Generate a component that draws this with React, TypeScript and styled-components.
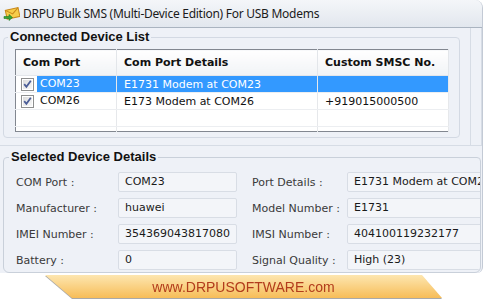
import styled, { createGlobalStyle } from 'styled-components';

const GlobalStyle = createGlobalStyle`
  html, body {
    margin: 0;
    padding: 0;
    background: #ffffff;
  }
  body {
    width: 483px;
    height: 300px;
    overflow: hidden;
    font-family: "DejaVu Sans", Verdana, sans-serif;
  }
`;

const devices = [
  { port: 'COM23', details: 'E1731 Modem at COM23', smsc: '', selected: true },
  { port: 'COM26', details: 'E173 Modem at COM26', smsc: '+919015000500', selected: false },
];

const details = [
  ['COM Port :', 'COM23', 'Port Details :', 'E1731 Modem at COM23'],
  ['Manufacturer :', 'huawei', 'Model Number :', 'E1731'],
  ['IMEI Number :', '354369043817080', 'IMSI Number :', '404100119232177'],
  ['Battery :', '0', 'Signal Quality :', 'High (23)'],
];

const AppIcon = () => (
  <svg width="17" height="15" viewBox="0 0 17 15">
    <g transform="rotate(-12 9 7)">
      <rect x="3" y="3" width="13" height="9" fill="#f7cd4a" stroke="#c9891a" strokeWidth="1" />
      <path d="M3 3 L9.5 8 L16 3" fill="none" stroke="#c9891a" strokeWidth="1" />
    </g>
    <path d="M1 10.5 H6 V8.5 L9.5 11.5 L6 14.5 V12.5 H1 Z" fill="#3aa636" stroke="#1f7a22" strokeWidth="0.6" />
  </svg>
);

const CheckMark = () => (
  <svg width="13" height="13" viewBox="0 0 13 13">
    <defs>
      <linearGradient id="cb" x1="0" y1="0" x2="1" y2="1">
        <stop offset="0" stopColor="#dcdcdc" />
        <stop offset="1" stopColor="#f8f8f8" />
      </linearGradient>
    </defs>
    <rect x="0.5" y="0.5" width="12" height="12" fill="#fff" stroke="#8e8f8f" />
    <rect x="2" y="2" width="9" height="9" fill="url(#cb)" />
    <path d="M3.2 6.2 L5.4 8.8 L9.8 2.8" fill="none" stroke="#4b5d97" strokeWidth="1.8" />
  </svg>
);

export default function App() {
  return (
    <Page>
      <GlobalStyle />
      <Window>
        <TitleBar>
          <AppIcon />
          <TitleText>DRPU Bulk SMS (Multi-Device Edition) For USB Modems</TitleText>
        </TitleBar>
        <TopArea>
          <Group>
            <GroupLegend>Connected Device List</GroupLegend>
            <DeviceTable>
              <colgroup>
                <col style={{ width: 101 }} />
                <col style={{ width: 201 }} />
                <col />
              </colgroup>
              <thead>
                <tr>
                  <HeadCell>Com Port</HeadCell>
                  <HeadCell>Com Port Details</HeadCell>
                  <HeadCell>Custom SMSC No.</HeadCell>
                </tr>
              </thead>
              <tbody>
                {devices.map((d) => (
                  <tr key={d.port}>
                    <PortCell>
                      <PortInner>
                        <CheckMark />
                        <PortName $selected={d.selected}>{d.port}</PortName>
                      </PortInner>
                    </PortCell>
                    <Cell $selected={d.selected}>{d.details}</Cell>
                    <Cell $selected={d.selected}>{d.smsc}</Cell>
                  </tr>
                ))}
                <tr>
                  <Cell />
                  <Cell />
                  <Cell />
                </tr>
                <FillerRow>
                  <td />
                  <td />
                  <td />
                </FillerRow>
              </tbody>
            </DeviceTable>
          </Group>
          <SideRail />
        </TopArea>
        <Splitter />
        <DetailsGroup>
          <GroupLegend>Selected Device Details</GroupLegend>
          <DetailsGrid>
            {details.map(([l1, v1, l2, v2]) => (
              <DetailRow key={l1}>
                <FieldLabel>{l1}</FieldLabel>
                <FieldValue>{v1}</FieldValue>
                <FieldLabel $right>{l2}</FieldLabel>
                <FieldValue>{v2}</FieldValue>
              </DetailRow>
            ))}
          </DetailsGrid>
        </DetailsGroup>
      </Window>
      <BannerShadow>
        <Banner>www.DRPUSOFTWARE.com</Banner>
      </BannerShadow>
    </Page>
  );
}

const Page = styled.div`
  width: 483px;
  height: 300px;
  display: flex;
  flex-direction: column;
  background: #ffffff;
`;

const Window = styled.div`
  width: 482px;
  height: 273px;
  display: flex;
  flex-direction: column;
  background: #eef1f7;
  border-right: 1px solid #c3cad5;
  border-radius: 0 8px 6px 0;
  overflow: hidden;
`;

const TitleBar = styled.div`
  height: 28px;
  flex-shrink: 0;
  display: flex;
  align-items: center;
  gap: 3px;
  padding-left: 3px;
  background: linear-gradient(#f4f6f9, #e2e7ee);
  border-bottom: 1px solid #aab4c0;
  box-sizing: border-box;
`;

const TitleText = styled.span`
  font-family: "Noto Sans", "Open Sans", sans-serif;
  font-size: 12px;
  letter-spacing: -0.27px;
  color: #1b1b1b;
  padding-bottom: 1px;
`;

const TopArea = styled.div`
  height: 117px;
  flex-shrink: 0;
  display: flex;
`;

const Group = styled.fieldset`
  align-self: flex-start;
  margin: 0 0 0 3px;
  padding: 0 10px 5px 11px;
  min-width: 0;
  width: 434px;
  border: 1px solid #d3d9e3;
  border-radius: 4px;
`;

const GroupLegend = styled.legend`
  font-family: "Liberation Sans", Arial, sans-serif;
  font-weight: bold;
  font-size: 13px;
  line-height: 18px;
  color: #111111;
  padding: 0 2px;
  margin-left: -7px;
`;

const SideRail = styled.div`
  width: 10px;
  margin-left: 10px;
  border-left: 1px solid #d6dce5;
  border-right: 1px solid #d6dce5;
`;

const DeviceTable = styled.table`
  margin-top: 3px;
  width: 434px;
  table-layout: fixed;
  border-collapse: collapse;
  border: 1px solid #828790;
  background: #ffffff;
  font-size: 11px;
  color: #111111;
`;

const HeadCell = styled.th`
  height: 25px;
  padding: 0 6px 0 7px;
  text-align: left;
  font-size: 11px;
  font-weight: bold;
  background: linear-gradient(#ffffff, #f1f3f6);
  border-right: 1px solid #e3e6ea;
  border-bottom: 1px solid #e3e6ea;
  white-space: nowrap;
  overflow: hidden;
`;

const Cell = styled.td<{ $selected?: boolean }>`
  height: 16px;
  padding: 0 6px 0 7px;
  white-space: nowrap;
  overflow: hidden;
  background: ${(p) => (p.$selected ? '#3399ff' : 'transparent')};
  color: ${(p) => (p.$selected ? '#ffffff' : '#111111')};
  border-right: 1px solid #e6e8eb;
  border-bottom: 1px solid #eceef1;
`;

const PortCell = styled.td`
  height: 16px;
  padding: 0 0 0 5px;
  border-right: 1px solid #e6e8eb;
  border-bottom: 1px solid #eceef1;
`;

const PortInner = styled.div`
  display: flex;
  align-items: center;
  gap: 3px;
  height: 16px;
`;

const PortName = styled.span<{ $selected?: boolean }>`
  flex: 1;
  height: 16px;
  line-height: 16px;
  padding-left: 3px;
  background: ${(p) => (p.$selected ? '#3399ff' : 'transparent')};
  color: ${(p) => (p.$selected ? '#ffffff' : '#111111')};
`;

const FillerRow = styled.tr`
  height: 5px;
  td {
    border-right: 1px solid #e6e8eb;
  }
`;

const Splitter = styled.div`
  height: 2px;
  flex-shrink: 0;
  border-top: 1px solid #d6dce5;
`;

const DetailsGroup = styled.fieldset`
  flex: 1;
  margin: 0 1px 0 3px;
  padding: 0 0 0 12px;
  min-width: 0;
  border: 1px solid #c9d0da;
  border-radius: 4px 4px 6px 6px;
  overflow: hidden;
`;

const DetailsGrid = styled.div`
  display: flex;
  flex-direction: column;
  gap: 6px;
  padding-top: 6px;
`;

const DetailRow = styled.div`
  display: grid;
  grid-template-columns: 102px 119px 110px 140px;
  align-items: center;
  height: 20px;
`;

const FieldLabel = styled.span<{ $right?: boolean }>`
  padding-left: ${(p) => (p.$right ? 15 : 0)}px;
  font-size: 11px;
  color: #3a3a3a;
  white-space: nowrap;
`;

const FieldValue = styled.div`
  height: 20px;
  box-sizing: border-box;
  padding-left: 6px;
  line-height: 18px;
  font-size: 11px;
  color: #1a1a1a;
  background: #f3f5f9;
  border: 1px solid #d8dde5;
  border-radius: 2px;
  white-space: nowrap;
  overflow: hidden;
`;

const BannerShadow = styled.div`
  margin: 2px 0 0 45px;
  width: 397px;
  filter: drop-shadow(0 1px 0 #a9a9a9);
`;

const Banner = styled.div`
  height: 23px;
  display: flex;
  align-items: center;
  justify-content: center;
  background: linear-gradient(#fde6b0, #f7bd58);
  clip-path: polygon(0 0, 377px 0, 397px 23px, 27px 23px);
  font-family: "Liberation Sans", Arial, sans-serif;
  font-size: 14px;
  color: #b23c1c;
`;
